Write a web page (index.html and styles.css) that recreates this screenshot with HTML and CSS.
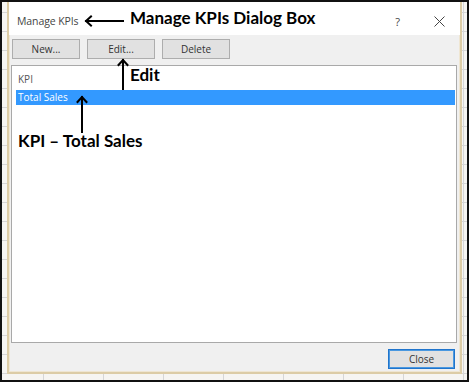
FILE: index.html
```html
<!DOCTYPE html>
<html>
<head>
<meta charset="utf-8">
<link rel="stylesheet" href="styles.css">
</head>
<body>
<div class="frame">
  <div class="sheet">
    <div class="dialog">
      <div class="titlebar">
        <span class="title">Manage KPIs</span>
        <span class="help">?</span>
        <svg class="xbtn" width="11" height="11" viewBox="0 0 11 11"><path d="M0.5 0.5 L10.5 10.5 M10.5 0.5 L0.5 10.5" stroke="#444" stroke-width="1" fill="none"/></svg>
      </div>
      <div class="body">
        <div class="toolbar">
          <button class="btn">New...</button>
          <button class="btn">Edit...</button>
          <button class="btn">Delete</button>
        </div>
        <div class="listbox">
          <div class="lhead">KPI</div>
          <div class="lrow selected">Total Sales</div>
        </div>
        <div class="footer">
          <button class="btn primary">Close</button>
        </div>
      </div>
    </div>
  </div>
  <div class="overlay">
    <svg class="arrows" width="469" height="382" viewBox="0 0 469 382">
      <g stroke="#000" stroke-width="2" fill="none" stroke-linecap="square">
        <path d="M86 21 L123 21"/>
        <path d="M91 16.5 L86 21 L91 25.5"/>
        <path d="M123 60 L123 89"/>
        <path d="M118.5 65 L123 60 L127.5 65"/>
        <path d="M82 97 L82 132"/>
        <path d="M77.5 102 L82 97 L86.5 102"/>
      </g>
    </svg>
    <span class="note note-title">Manage KPIs Dialog Box</span>
    <span class="note note-edit">Edit</span>
    <span class="note note-kpi">KPI – Total Sales</span>
  </div>
</div>
</body>
</html>
```

FILE: styles.css
```css
* { box-sizing: border-box; }
html, body { margin: 0; padding: 0; background: #fff; }

.frame {
  position: relative;
  width: 469px;
  height: 382px;
  border: 2px solid #111;
  overflow: hidden;
}

.sheet {
  width: 100%;
  height: 100%;
  padding: 0 5px 6px 5px;
  background-color: #f6f5f2;
  background-image:
    repeating-linear-gradient(to bottom, transparent 0 10px, #d6d6d6 10px 11px, transparent 11px 19px),
    repeating-linear-gradient(to right, transparent 0 41px, #d6d6d6 41px 42px, transparent 42px 60px);
}

.dialog {
  width: 100%;
  height: 100%;
  display: flex;
  flex-direction: column;
  border: 2px solid #dccca6;
  border-top: 0;
  box-shadow: inset 1px 0 0 #efe6d2, inset -1px 0 0 #efe6d2, inset 0 -1px 0 #efe6d2;
  background: #f0f0f0;
  font-family: "Open Sans", "Noto Sans", sans-serif;
}

.titlebar {
  height: 33px;
  flex: none;
  display: flex;
  align-items: center;
  background: #fff;
  padding: 5px 0 0 8px;
  color: #444;
}

.title {
  font-size: 10.5px;
  letter-spacing: -0.1px;
  color: #444;
}

.help {
  margin-left: auto;
  font-size: 11px;
  color: #444;
  margin-right: 34px;
}

.xbtn {
  margin-right: 15px;
}

.body {
  flex: 1;
  display: flex;
  flex-direction: column;
  padding: 4px 3px 0 2px;
}

.toolbar {
  display: flex;
  gap: 7px;
  padding-left: 1px;
}

.btn {
  width: 68px;
  height: 20px;
  padding: 0;
  margin: 0;
  border: 1px solid #adadad;
  background: #e1e1e1;
  color: #333;
  font-family: "Open Sans", "Noto Sans", sans-serif;
  font-size: 10px;
  line-height: 18px;
  text-align: center;
}

.listbox {
  margin-top: 6px;
  height: 278px;
  background: #fff;
  border: 1px solid #a9a9a9;
  padding: 0 1px 0 4px;
}

.lhead {
  height: 24px;
  line-height: 26px;
  padding-left: 2px;
  font-size: 10px;
  color: #555;
}

.lrow {
  height: 15px;
  line-height: 15px;
  padding-left: 2px;
  font-size: 10px;
  color: #444;
}

.lrow.selected {
  background: #3399ff;
  color: #fff;
}

.footer {
  display: flex;
  justify-content: flex-end;
  padding-top: 6px;
  padding-right: 2px;
}

.btn.primary {
  width: 67px;
  height: 20px;
  border: 1px solid #1f74cc;
  box-shadow: inset 0 0 0 1px #4a98e0;
}

.overlay {
  position: absolute;
  left: -2px;
  top: -2px;
  width: 469px;
  height: 382px;
  pointer-events: none;
}

.arrows {
  position: absolute;
  left: 0;
  top: 0;
}

.note {
  position: absolute;
  font-family: Lato, "Open Sans", sans-serif;
  font-weight: 700;
  font-size: 17px;
  line-height: 20px;
  color: #000;
  white-space: nowrap;
}

.note-title { left: 130px; top: 8px; }
.note-edit { left: 130px; top: 65px; }
.note-kpi { left: 18px; top: 131px; }
```
